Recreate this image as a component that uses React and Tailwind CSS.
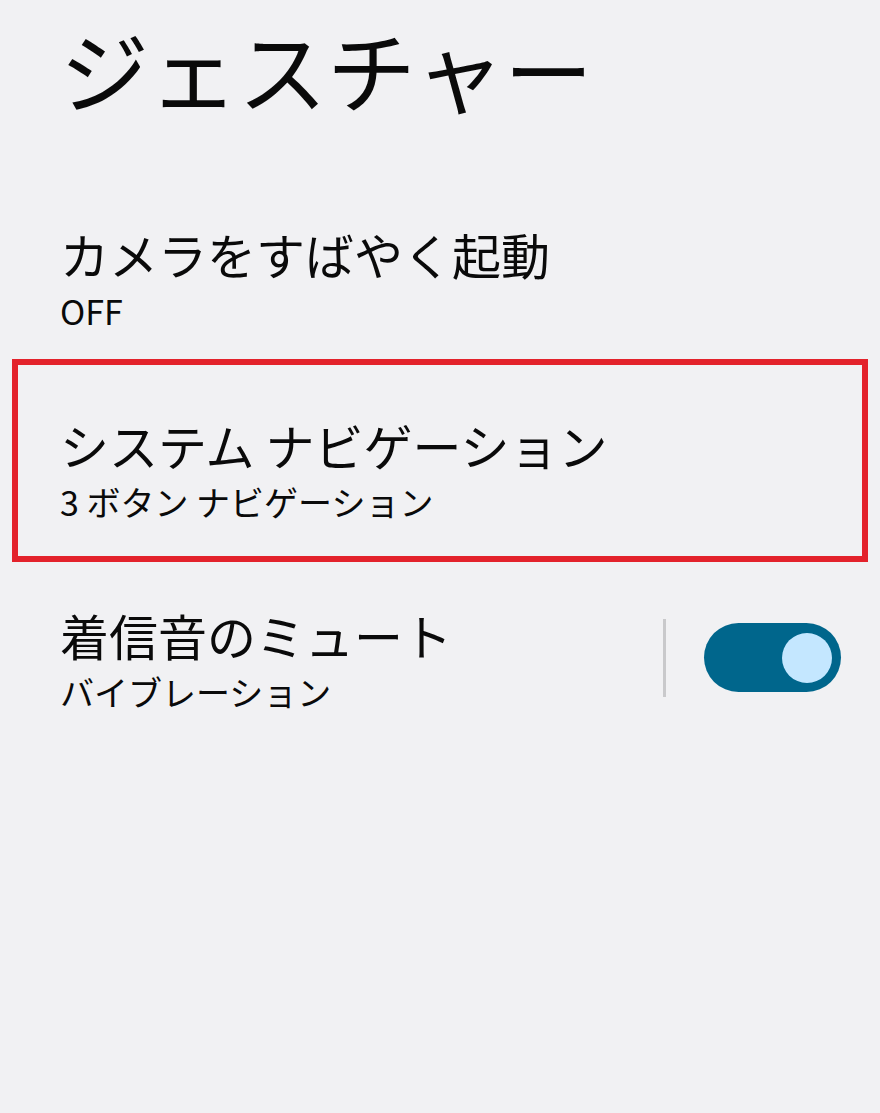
export default function App() {
  const font = { fontFamily: '"Noto Sans CJK JP", "Noto Sans", sans-serif' };
  return (
    <div className="min-h-[1113px] w-[880px] bg-[#f1f1f3] text-[#0a0a0a]" style={font}>
      <div className="pt-[24px] pl-[60px]">
        <h1 className="h-[88px] text-[89px] leading-[88px] font-normal whitespace-nowrap">ジェスチャー</h1>
      </div>

      <div className="mt-[110px] pl-[60px]">
        <div className="h-[64px] text-[49px] leading-[64px] whitespace-nowrap">カメラをすばやく起動</div>
        <div className="h-[50px] text-[34px] leading-[50px] whitespace-nowrap">OFF</div>
      </div>

      <div className="mt-[23px] mx-[12px] border-[6px] border-[#e3222b] pt-[48px] pb-[29px] pl-[42px]">
        <div className="h-[64px] text-[49px] leading-[64px] whitespace-nowrap">システム ナビゲーション</div>
        <div className="h-[50px] text-[34px] leading-[50px] whitespace-nowrap">3 ボタン ナビゲーション</div>
      </div>

      <div className="mt-[41px] flex items-center pl-[60px] pr-[39px]">
        <div className="flex-1">
          <div className="h-[64px] text-[49px] leading-[64px] whitespace-nowrap">着信音のミュート</div>
          <div className="h-[50px] text-[34px] leading-[50px] whitespace-nowrap">バイブレーション</div>
        </div>
        <div className="h-[78px] w-[3px] bg-[#c9c9cb] mr-[38px] mt-[-4px]" />
        <div className="flex h-[69px] w-[137px] items-center justify-end rounded-full bg-[#00668c] pr-[9px] mt-[-5px]">
          <div className="h-[50px] w-[50px] rounded-full bg-[#c4e7ff]" />
        </div>
      </div>
    </div>
  );
}
